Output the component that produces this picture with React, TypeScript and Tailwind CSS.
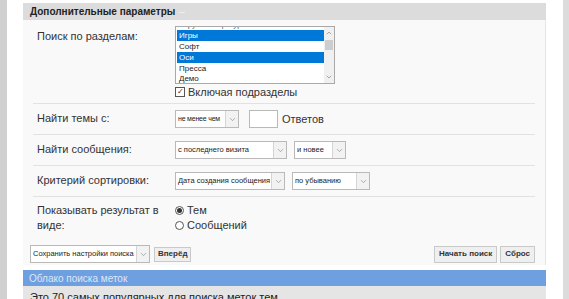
import { ChevronDown, ChevronUp } from "lucide-react";

const font = { fontFamily: '"Liberation Sans", Arial, sans-serif' };

const Select = ({ text, w, small }: { text: string; w: string; small?: boolean }) => (
    <div className={`flex h-[18px] shrink-0 items-center border border-[#b9b9b9] bg-white ${w}`}>
        <span
            className={`flex-1 overflow-hidden whitespace-nowrap pl-[2px] text-[#222] ${small ? "text-[7px] tracking-[-0.2px]" : "text-[7.5px]"}`}
        >
            {text}
        </span>
        <span className="flex h-full w-[13px] items-center justify-center border-l border-[#d4d4d4] bg-[#f2f2f2] text-[#777]">
            <ChevronDown size={9} strokeWidth={1.5} />
        </span>
    </div>
);

const Row = ({ label, children }: { label: React.ReactNode; children: React.ReactNode }) => (
    <div className="flex border-b border-[#e2e2e2] py-[6px]">
        <div className="w-[142px] pl-[4px] pt-[1px] text-[11px] leading-[15px] text-[#333]">{label}</div>
        <div className="flex flex-1 items-center gap-[7px]">{children}</div>
    </div>
);

const items = [
    { t: "Игры", sel: true },
    { t: "Софт", sel: false },
    { t: "Оси", sel: true },
    { t: "Пресса", sel: false },
    { t: "Демо", sel: false },
];

export default function App() {
    return (
        <div className="flex h-[299px] w-[569px] overflow-hidden bg-white" style={font}>
            <div className="w-[7px] shrink-0 bg-[#d0d0d0]" />
            <div className="w-[16px] shrink-0" />
            <div className="flex w-[523px] shrink-0 flex-col pt-[3px]">
                <div className="flex h-[17px] shrink-0 items-center bg-[#dcdcdc] pl-[7px] text-[10px] font-bold text-[#222]">
                    Дополнительные параметры <span className="ml-[4px] font-normal text-[#f4f4f4]">–</span>
                </div>
                <div className="shrink-0 border-r border-[#e6e6e6] bg-[#f9f9f9] px-[10px] pb-[1px]">
                    <div className="flex border-b border-[#e2e2e2] pb-[4px] pt-[6px]">
                        <div className="w-[142px] pl-[4px] pt-[2px] text-[11px] text-[#333]">Поиск по разделам:</div>
                        <div className="flex flex-col">
                            <div className="flex h-[58px] w-[160px] border border-[#a9a9a9] bg-white">
                                <div className="flex-1 overflow-hidden pl-[1px] text-[8px] leading-[11px] text-[#222]">
                                    <div className="-mt-[8px] h-[11px] pl-[2px] text-[#555]">Игрушки и фигурки</div>
                                    {items.map((i) => (
                                        <div
                                            key={i.t}
                                            className={i.sel ? "h-[11px] bg-[#0078d7] pl-[2px] text-white" : "h-[10.5px] pl-[2px]"}
                                        >
                                            {i.t}
                                        </div>
                                    ))}
                                </div>
                                <div className="flex w-[10px] flex-col items-center bg-[#f0f0f0] text-[#606060]">
                                    <ChevronUp size={8} strokeWidth={1.5} className="mt-[2px]" />
                                    <div className="mt-[3px] h-[10px] w-[8px] bg-[#cdcdcd]" />
                                    <div className="flex-1" />
                                    <ChevronDown size={8} strokeWidth={1.5} className="mb-[2px]" />
                                </div>
                            </div>
                            <label className="mt-[1px] flex h-[14px] items-center gap-[3px] text-[11px] text-[#333]">
                                <span className="flex h-[10px] w-[10px] items-center justify-center border border-[#555] bg-white text-[8px] leading-none">✓</span>
                                Включая подразделы
                            </label>
                        </div>
                    </div>
                    <Row label="Найти темы с:">
                        <Select text="не менее чем" w="w-[64px]" small />
                        <div className="ml-[3px] h-[18px] w-[29px] border border-[#b9b9b9] bg-white" />
                        <span className="-ml-[3px] text-[11px] text-[#333]">Ответов</span>
                    </Row>
                    <Row label="Найти сообщения:">
                        <Select text="с последнего визита" w="w-[112px]" />
                        <Select text="и новее" w="w-[52px]" />
                    </Row>
                    <Row label="Критерий сортировки:">
                        <Select text="Дата создания сообщения" w="w-[110px]" />
                        <Select text="по убыванию" w="w-[78px]" />
                    </Row>
                    <div className="flex pb-[12px] pt-[6px]">
                        <div className="w-[142px] pl-[4px] text-[11px] leading-[15px] text-[#333]">Показывать результат в виде:</div>
                        <div className="flex flex-col text-[11px] leading-[15px] text-[#333]">
                            <label className="flex items-center gap-[3px]">
                                <span className="flex h-[9px] w-[9px] items-center justify-center rounded-full border border-[#555] bg-white">
                                    <span className="h-[5px] w-[5px] rounded-full bg-[#333]" />
                                </span>
                                Тем
                            </label>
                            <label className="flex items-center gap-[3px]">
                                <span className="h-[9px] w-[9px] rounded-full border border-[#555] bg-white" />
                                Сообщений
                            </label>
                        </div>
                    </div>
                    <div className="-ml-[3px] flex items-center pb-[1px]">
                        <Select text="Сохранить настройки поиска" w="w-[120px]" />
                        <button className="ml-[4px] h-[15px] border border-[#c9c9c9] bg-[#efefef] px-[3px] text-[8px] font-bold leading-none text-[#333]">Вперёд</button>
                        <div className="flex-1" />
                        <button className="h-[17px] border border-[#c9c9c9] bg-[#efefef] px-[4px] text-[8px] font-bold leading-none text-[#333]">Начать поиск</button>
                        <button className="ml-[3px] h-[17px] border border-[#c9c9c9] bg-[#efefef] px-[4px] text-[8px] font-bold leading-none text-[#333]">Сброс</button>
                    </div>
                </div>
                <div className="mt-[5px] flex h-[16px] shrink-0 items-center bg-[#6e9fe0] pl-[6px] text-[10px] text-[#dce7f7]">Облако поиска меток</div>
                <div className="shrink-0 bg-[#e5e5e5] pl-[7px] pt-[3px] text-[11px] text-[#222]">Это 70 самых популярных для поиска меток тем.</div>
            </div>
            <div className="flex-1" />
            <div className="w-[6px] shrink-0 bg-[#dcdcdc]" />
        </div>
    );
}
